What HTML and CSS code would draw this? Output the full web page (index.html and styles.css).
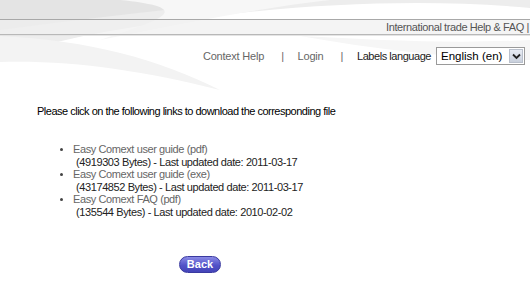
FILE: index.html
```html
<!DOCTYPE html>
<html>
<head>
    <title>Easy Comext - Documentation</title>
    <meta charset="UTF-8">
    <link rel="stylesheet" href="styles.css">
</head>
<body>
    <svg class="swoosh" width="530" height="110" viewBox="0 0 530 110" aria-hidden="true">
        <path d="M0 0 H530 V8 C420 -2 300 4 180 20 C110 30 50 40 0 60 Z" fill="#ededed"/>
        <path d="M0 0 H260 C200 6 120 14 0 30 Z" fill="#e4e4e4"/>
        <path d="M120 0 H330 C260 8 190 22 100 40 C160 20 200 8 120 0 Z" fill="#f7f7f7"/>
        <path d="M0 36 C90 40 160 60 220 90 C140 70 70 60 0 62 Z" fill="#f3f3f3"/>
        <path d="M300 36 C380 40 450 44 530 40 V60 C450 58 380 50 300 36 Z" fill="#f6f6f6"/>
    </svg>

    <div class="topbar">International trade Help &amp; FAQ |</div>

    <div class="nav">
        <span class="nav-link">Context Help</span>
        <span class="sep">|</span>
        <span class="nav-link">Login</span>
        <span class="sep">|</span>
        <span class="nav-label">Labels language</span>
        <div class="lang-select">
            <span class="lang-value">English (en)</span>
            <span class="lang-arrow">
                <svg width="9" height="7" viewBox="0 0 9 7"><path d="M1 1.5 L4.5 5 L8 1.5" fill="none" stroke="#222" stroke-width="1.8"/></svg>
            </span>
        </div>
    </div>

    <p class="intro">Please click on the following links to download the corresponding file</p>

    <ul class="files">
        <li>
            <span class="file-link">Easy Comext user guide (pdf)</span><br>
            <span class="file-info">(4919303 Bytes) - Last updated date: 2011-03-17</span>
        </li>
        <li>
            <span class="file-link">Easy Comext user guide (exe)</span><br>
            <span class="file-info">(43174852 Bytes) - Last updated date: 2011-03-17</span>
        </li>
        <li>
            <span class="file-link">Easy Comext FAQ (pdf)</span><br>
            <span class="file-info">(135544 Bytes) - Last updated date: 2010-02-02</span>
        </li>
    </ul>

    <div class="actions">
        <button class="back-button">Back</button>
    </div>
</body>
</html>
```

FILE: styles.css
```css
/* Page de base */
body {
    margin: 0;
    background-color: #fff;
    font-family: "Liberation Sans", Arial, sans-serif;
    font-size: 11px;
    letter-spacing: -0.4px;
    color: #111;
    position: relative;
    overflow: hidden;
}

.swoosh {
    position: absolute;
    top: 0;
    left: 0;
    z-index: -1;
}

/* Barre du haut */
.topbar {
    margin-top: 19px;
    height: 14px;
    line-height: 14px;
    border-top: 1px solid #a8a8a8;
    border-bottom: 1px solid #b8b8b8;
    box-shadow: 0 1px 0 #e4e4e4;
    background-color: rgba(240, 240, 240, 0.7);
    text-align: right;
    padding-right: 1px;
    color: #555;
    white-space: nowrap;
}

/* Navigation */
.nav {
    margin-top: 11px;
    display: flex;
    justify-content: flex-end;
    align-items: center;
    padding-right: 5px;
    height: 20px;
    color: #666;
}

.nav-link {
    letter-spacing: -0.2px;
}

.sep {
    margin: 0 14px 0 17px;
}

.nav-label {
    color: #222;
    margin-right: 5px;
    letter-spacing: -0.45px;
}

.lang-select {
    display: flex;
    align-items: center;
    width: 87px;
    height: 16px;
    border: 1px solid #9a9a9a;
    background-color: #fff;
    color: #000;
    letter-spacing: 0;
    font-size: 11.5px;
}

.lang-value {
    flex: 1;
    padding-left: 4px;
}

.lang-arrow {
    width: 14px;
    height: 14px;
    margin-right: 1px;
    display: flex;
    align-items: center;
    justify-content: center;
    background: linear-gradient(#e8ecf4, #c9d0dc);
    border: 1px solid #b9c0cc;
    box-sizing: border-box;
}

/* Contenu */
.intro {
    margin: 39px 0 0 37px;
    line-height: 13px;
    letter-spacing: -0.5px;
    color: #000;
}

.files {
    margin: 25px 0 0 0;
    padding-left: 73px;
    line-height: 12.6px;
    list-style: disc;
}

.files li::marker {
    color: #444;
    font-size: 10px;
}

.file-link {
    color: #666;
}

.file-info {
    padding-left: 3px;
    color: #222;
}

.actions {
    margin-top: 37px;
    padding-left: 179px;
}

.back-button {
    width: 42px;
    height: 17px;
    border: 1px solid #3a3aa0;
    border-radius: 9px;
    background: linear-gradient(#8a8ae6, #5252c8 55%, #4444b8);
    color: #fff;
    font-family: "Liberation Sans", Arial, sans-serif;
    font-weight: bold;
    font-size: 11px;
    letter-spacing: 0;
    padding: 0;
    cursor: pointer;
}
```
